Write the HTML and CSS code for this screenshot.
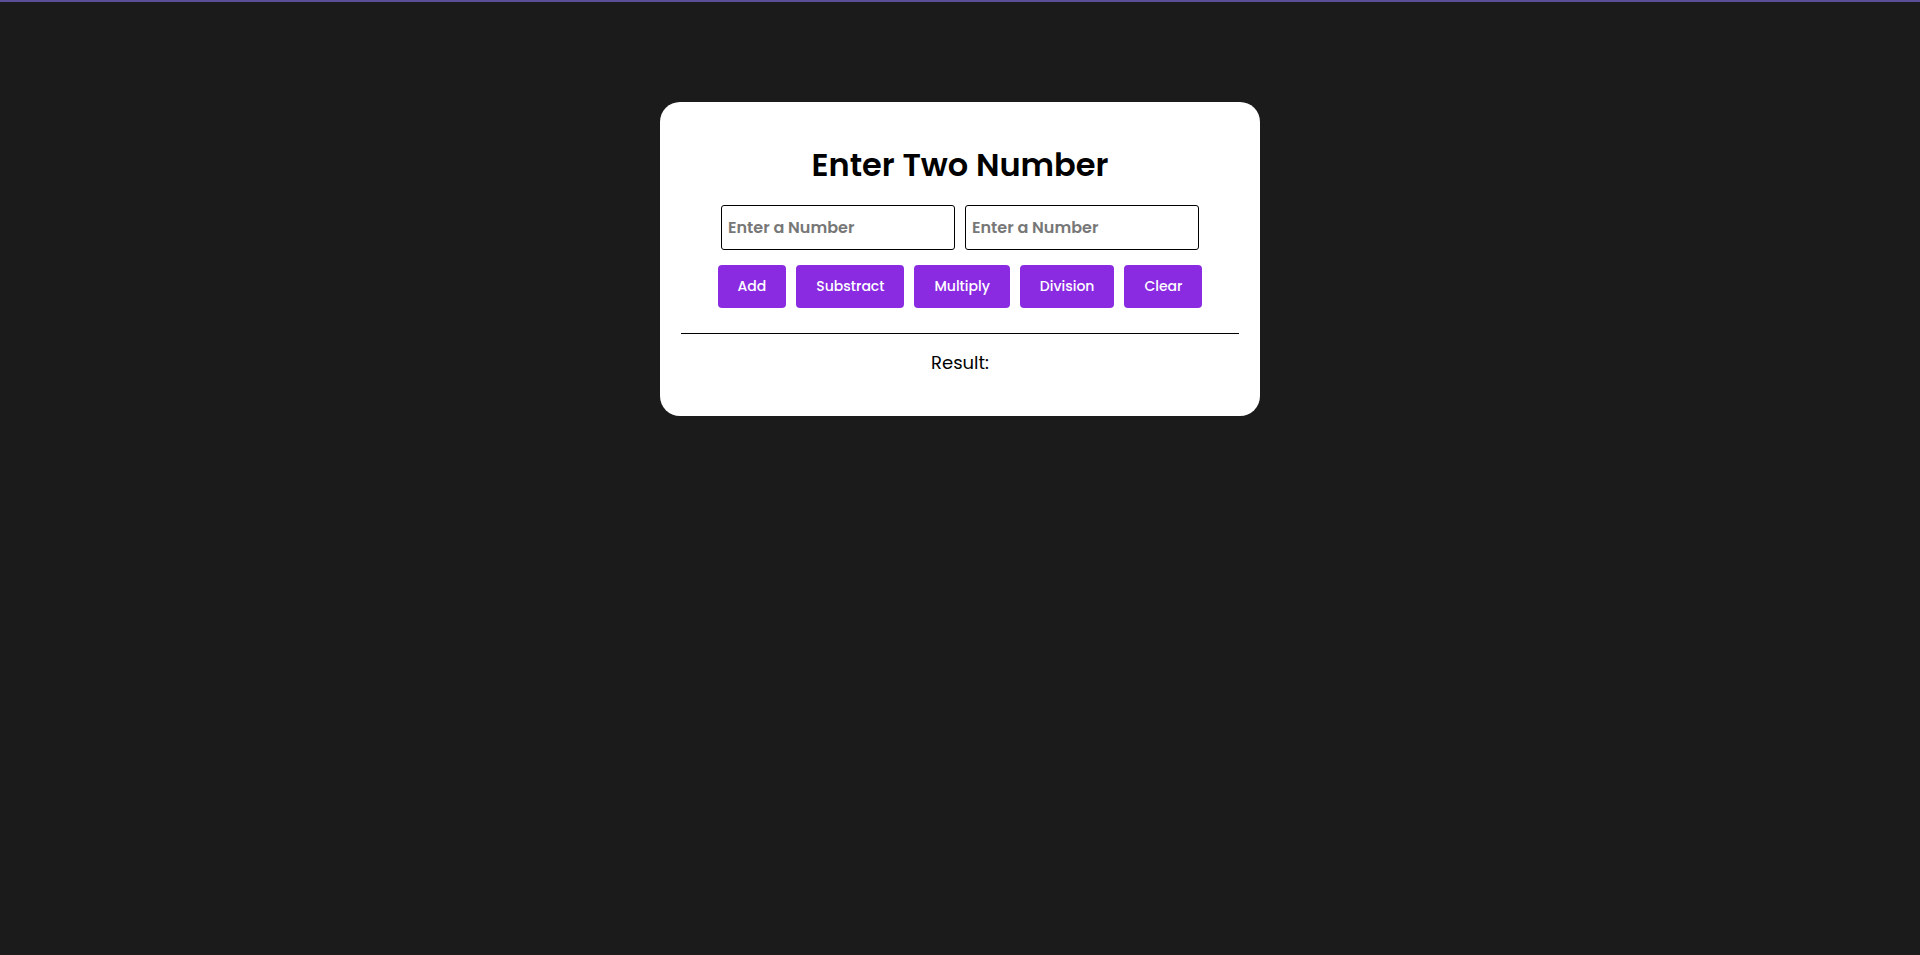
FILE: index.html
```html
<!DOCTYPE html>
<html lang="en">
<head>
<meta charset="UTF-8">
<title>Calculator</title>
<link rel="stylesheet" href="styles.css">
</head>
<body>
<div class="card">
  <h1 class="title">Enter Two Number</h1>
  <div class="inputs">
    <input class="num" type="number" placeholder="Enter a Number">
    <input class="num" type="number" placeholder="Enter a Number">
  </div>
  <div class="buttons">
    <button class="btn">Add</button>
    <button class="btn">Substract</button>
    <button class="btn">Multiply</button>
    <button class="btn">Division</button>
    <button class="btn">Clear</button>
  </div>
  <hr class="divider">
  <div class="result">Result:</div>
</div>
</body>
</html>
```

FILE: styles.css
```css
html, body {
  margin: 0;
  padding: 0;
}
body {
  background: #1b1b1b;
  border-top: 2px solid #5b4f98;
  min-height: 953px;
  font-family: "Poppins", "Open Sans", "Liberation Sans", sans-serif;
}
.card {
  box-sizing: border-box;
  width: 600px;
  margin: 100px auto 0;
  background: #ffffff;
  border-radius: 20px;
  padding: 20px 21px 20px;
  text-align: center;
}
.title {
  margin: 19px 0 16px;
  font-size: 32px;
  line-height: 48px;
  font-weight: 600;
  color: #000;
}
.inputs {
  display: flex;
  justify-content: center;
  gap: 10px;
}
.num {
  box-sizing: border-box;
  width: 234px;
  height: 45px;
  border: 1px solid #000;
  border-radius: 3px;
  padding: 0 6px;
  font-family: inherit;
  font-size: 16px;
  font-weight: 600;
  outline: none;
  -moz-appearance: textfield;
}
.num::placeholder {
  color: #777;
}
.num::-webkit-outer-spin-button,
.num::-webkit-inner-spin-button {
  -webkit-appearance: none;
  margin: 0;
}
.buttons {
  display: flex;
  justify-content: center;
  gap: 10px;
  margin-top: 15px;
}
.btn {
  height: 43px;
  padding: 0 20px;
  border: none;
  border-radius: 4px;
  background: #8a2be2;
  color: #fff;
  font-family: inherit;
  font-size: 14px;
  font-weight: 500;
  cursor: pointer;
}
.divider {
  margin: 25px 0 0;
  height: 0;
  border: none;
  border-top: 1px solid #000;
}
.result {
  padding-top: 15px;
  padding-bottom: 20px;
  font-size: 18px;
  line-height: 27px;
  font-weight: 400;
  color: #000;
}
```
